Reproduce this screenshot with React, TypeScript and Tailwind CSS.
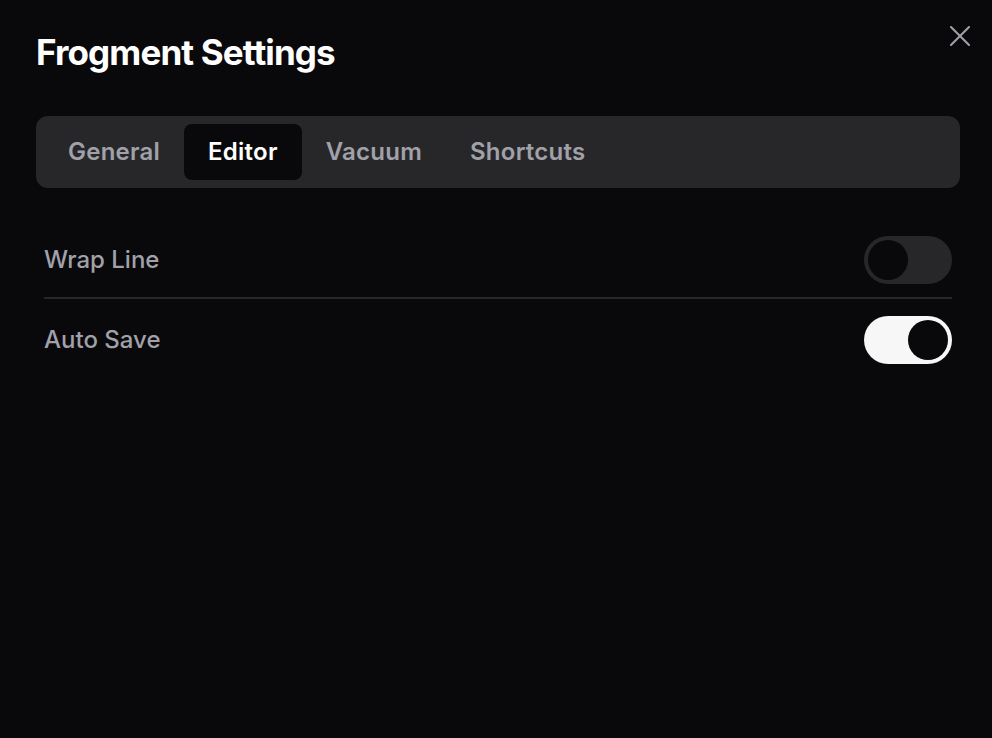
import { useState } from "react";

const TABS = ["General", "Editor", "Vacuum", "Shortcuts"];

function Toggle({ on, onChange }: { on: boolean; onChange: () => void }) {
  return (
    <button
      onClick={onChange}
      className={`flex h-12 w-[88px] items-center rounded-full p-1 transition-colors ${
        on ? "bg-[#f7f7f7]" : "bg-[#27272a]"
      }`}
    >
      <span
        className={`block h-10 w-10 rounded-full bg-[#09090b] transition-transform ${
          on ? "translate-x-10" : "translate-x-0"
        }`}
      />
    </button>
  );
}

function Row({ label, on, onChange, className }: { label: string; on: boolean; onChange: () => void; className?: string }) {
  return (
    <div className={`flex items-center justify-between ${className ?? ""}`}>
      <span className="text-[24px] font-medium text-[#a1a1aa]">{label}</span>
      <Toggle on={on} onChange={onChange} />
    </div>
  );
}

export default function App() {
  const [tab, setTab] = useState("Editor");
  const [wrap, setWrap] = useState(false);
  const [autoSave, setAutoSave] = useState(true);

  return (
    <div
      className="relative min-h-[738px] w-full bg-[#09090b] pl-9 pr-8 pt-8"
      style={{ fontFamily: "Inter, 'Noto Sans', sans-serif" }}
    >
      {/* close */}
      <button className="absolute right-[22px] top-[26px] text-[#a1a1aa]">
        <svg width="20" height="20" viewBox="0 0 20 20" fill="none" stroke="currentColor" strokeWidth="2" strokeLinecap="round">
          <path d="M1 1l18 18M19 1L1 19" />
        </svg>
      </button>

      <h1 className="mb-11 text-[35px] font-bold leading-10 tracking-tight text-white">Frogment Settings</h1>

      <div className="flex rounded-xl bg-[#27272a] p-2">
        {TABS.map((t) => (
          <button
            key={t}
            onClick={() => setTab(t)}
            className={`h-14 rounded-lg px-6 text-[24px] font-semibold tracking-[0.01em] ${
              tab === t ? "bg-[#09090b] text-white" : "text-[#a1a1aa]"
            }`}
          >
            {t}
          </button>
        ))}
      </div>

      <div className="mt-8 flex flex-col px-2">
        <Row label="Wrap Line" on={wrap} onChange={() => setWrap(!wrap)} className="pt-4 pb-[13px]" />
        <div className="h-0.5 bg-[#27272a]" />
        <Row label="Auto Save" on={autoSave} onChange={() => setAutoSave(!autoSave)} className="pt-[17px] pb-4" />
      </div>
    </div>
  );
}
